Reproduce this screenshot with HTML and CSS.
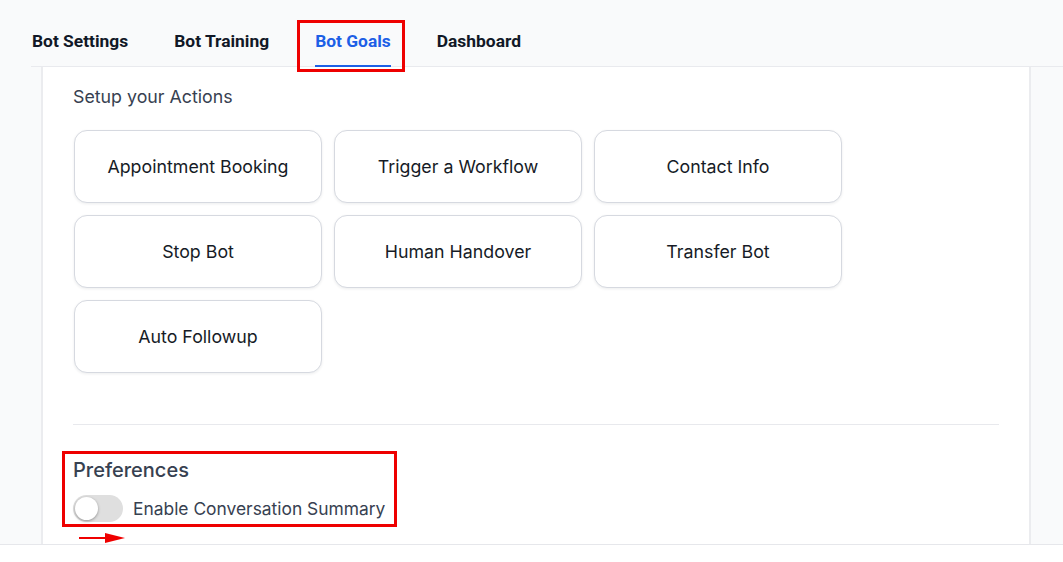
FILE: index.html
```html
<!DOCTYPE html>
<html lang="en">
<head>
  <meta charset="UTF-8">
  <meta name="viewport" content="width=device-width, initial-scale=1.0">
  <title>Bot Goals</title>
  <link rel="stylesheet" href="styles.css">
</head>
<body>
  <nav class="tabs">
    <a class="tab">Bot Settings</a>
    <a class="tab">Bot Training</a>
    <a class="tab active">Bot Goals</a>
    <a class="tab">Dashboard</a>
    <span class="mark mark-tab"></span>
  </nav>

  <main class="panel">
    <h2 class="section-title">Setup your Actions</h2>
    <div class="actions">
      <button class="action">Appointment Booking</button>
      <button class="action">Trigger a Workflow</button>
      <button class="action">Contact Info</button>
      <button class="action">Stop Bot</button>
      <button class="action">Human Handover</button>
      <button class="action">Transfer Bot</button>
      <button class="action">Auto Followup</button>
    </div>

    <hr class="divider">

    <section class="prefs">
      <span class="mark mark-prefs"></span>
      <h3 class="prefs-title">Preferences</h3>
      <label class="switch-row">
        <span class="switch"><span class="knob"></span></span>
        <span>Enable Conversation Summary</span>
      </label>
      <svg class="arrow" width="46" height="12" viewBox="0 0 46 12">
        <line x1="0" y1="6" x2="30" y2="6" stroke="#ef0000" stroke-width="2"/>
        <polygon points="26,1 46,6 26,11" fill="#ef0000"/>
      </svg>
    </section>
  </main>

  <footer class="footer"></footer>
</body>
</html>
```

FILE: styles.css
```css
* {
  box-sizing: border-box;
}

body {
  margin: 0;
  height: 562px;
  overflow: hidden;
  background-color: #f9fafb;
  font-family: Inter, "Noto Sans", sans-serif;
  display: flex;
  flex-direction: column;
}

.tabs {
  position: relative;
  display: flex;
  gap: 46px;
  margin-left: 31px;
  padding-left: 1px;
  height: 67px;
  align-items: flex-end;
  border-bottom: 1px solid #e9eaee;
}

.tab {
  font-family: Roboto, sans-serif;
  font-size: 17.4px;
  font-weight: 700;
  color: #111827;
  padding-bottom: 14px;
  border-bottom: 2px solid transparent;
  margin-bottom: -1px;
  cursor: pointer;
}

.tab.active {
  color: #1d5fe6;
  border-bottom-color: #1d5fe6;
}

.mark {
  position: absolute;
  border: 3px solid #ee0000;
  pointer-events: none;
}

.mark-tab {
  left: 266px;
  top: 20px;
  width: 108px;
  height: 52px;
}

.panel {
  width: 990px;
  height: 477px;
  margin-left: 41px;
  background-color: #fff;
  border-left: 2px solid #ebecef;
  border-right: 2px solid #ebecef;
  padding: 19px 30px 0 30px;
  display: flex;
  flex-direction: column;
}

.section-title {
  margin: 0 0 22px 0;
  font-size: 17.8px;
  font-weight: 400;
  line-height: 22px;
  color: #374151;
}

.actions {
  display: grid;
  grid-template-columns: repeat(3, 248px);
  grid-auto-rows: 73px;
  gap: 12px;
  margin-left: 1px;
}

.action {
  background-color: #fff;
  border: 1px solid #d6d9e0;
  border-radius: 13px;
  box-shadow: 0 1px 3px rgba(16, 24, 40, 0.08);
  font-family: inherit;
  font-size: 17.8px;
  font-weight: 400;
  color: #161b26;
  cursor: pointer;
}

.divider {
  width: 100%;
  margin: 51px 0 0 0;
  border: none;
  border-top: 1px solid #e8e9ed;
}

.prefs {
  position: relative;
  margin-top: 33px;
}

.mark-prefs {
  left: -11px;
  top: -7px;
  width: 335px;
  height: 76px;
}

.prefs-title {
  margin: 0 0 13px 0;
  font-size: 20px;
  font-weight: 500;
  line-height: 24px;
  color: #374151;
}

.switch-row {
  display: flex;
  align-items: center;
  gap: 10px;
  font-size: 17.4px;
  color: #374151;
}

.switch {
  position: relative;
  width: 50px;
  height: 27px;
  border-radius: 14px;
  background-color: #dfdfdf;
}

.knob {
  position: absolute;
  left: 2px;
  top: 2px;
  width: 23px;
  height: 23px;
  border-radius: 50%;
  background-color: #fff;
  box-shadow: 0 1px 3px rgba(0, 0, 0, 0.35);
}

.arrow {
  display: block;
  margin: 10px 0 0 6px;
}

.footer {
  height: 18px;
  background-color: #fff;
  border-top: 1px solid #e6e7eb;
}
```
